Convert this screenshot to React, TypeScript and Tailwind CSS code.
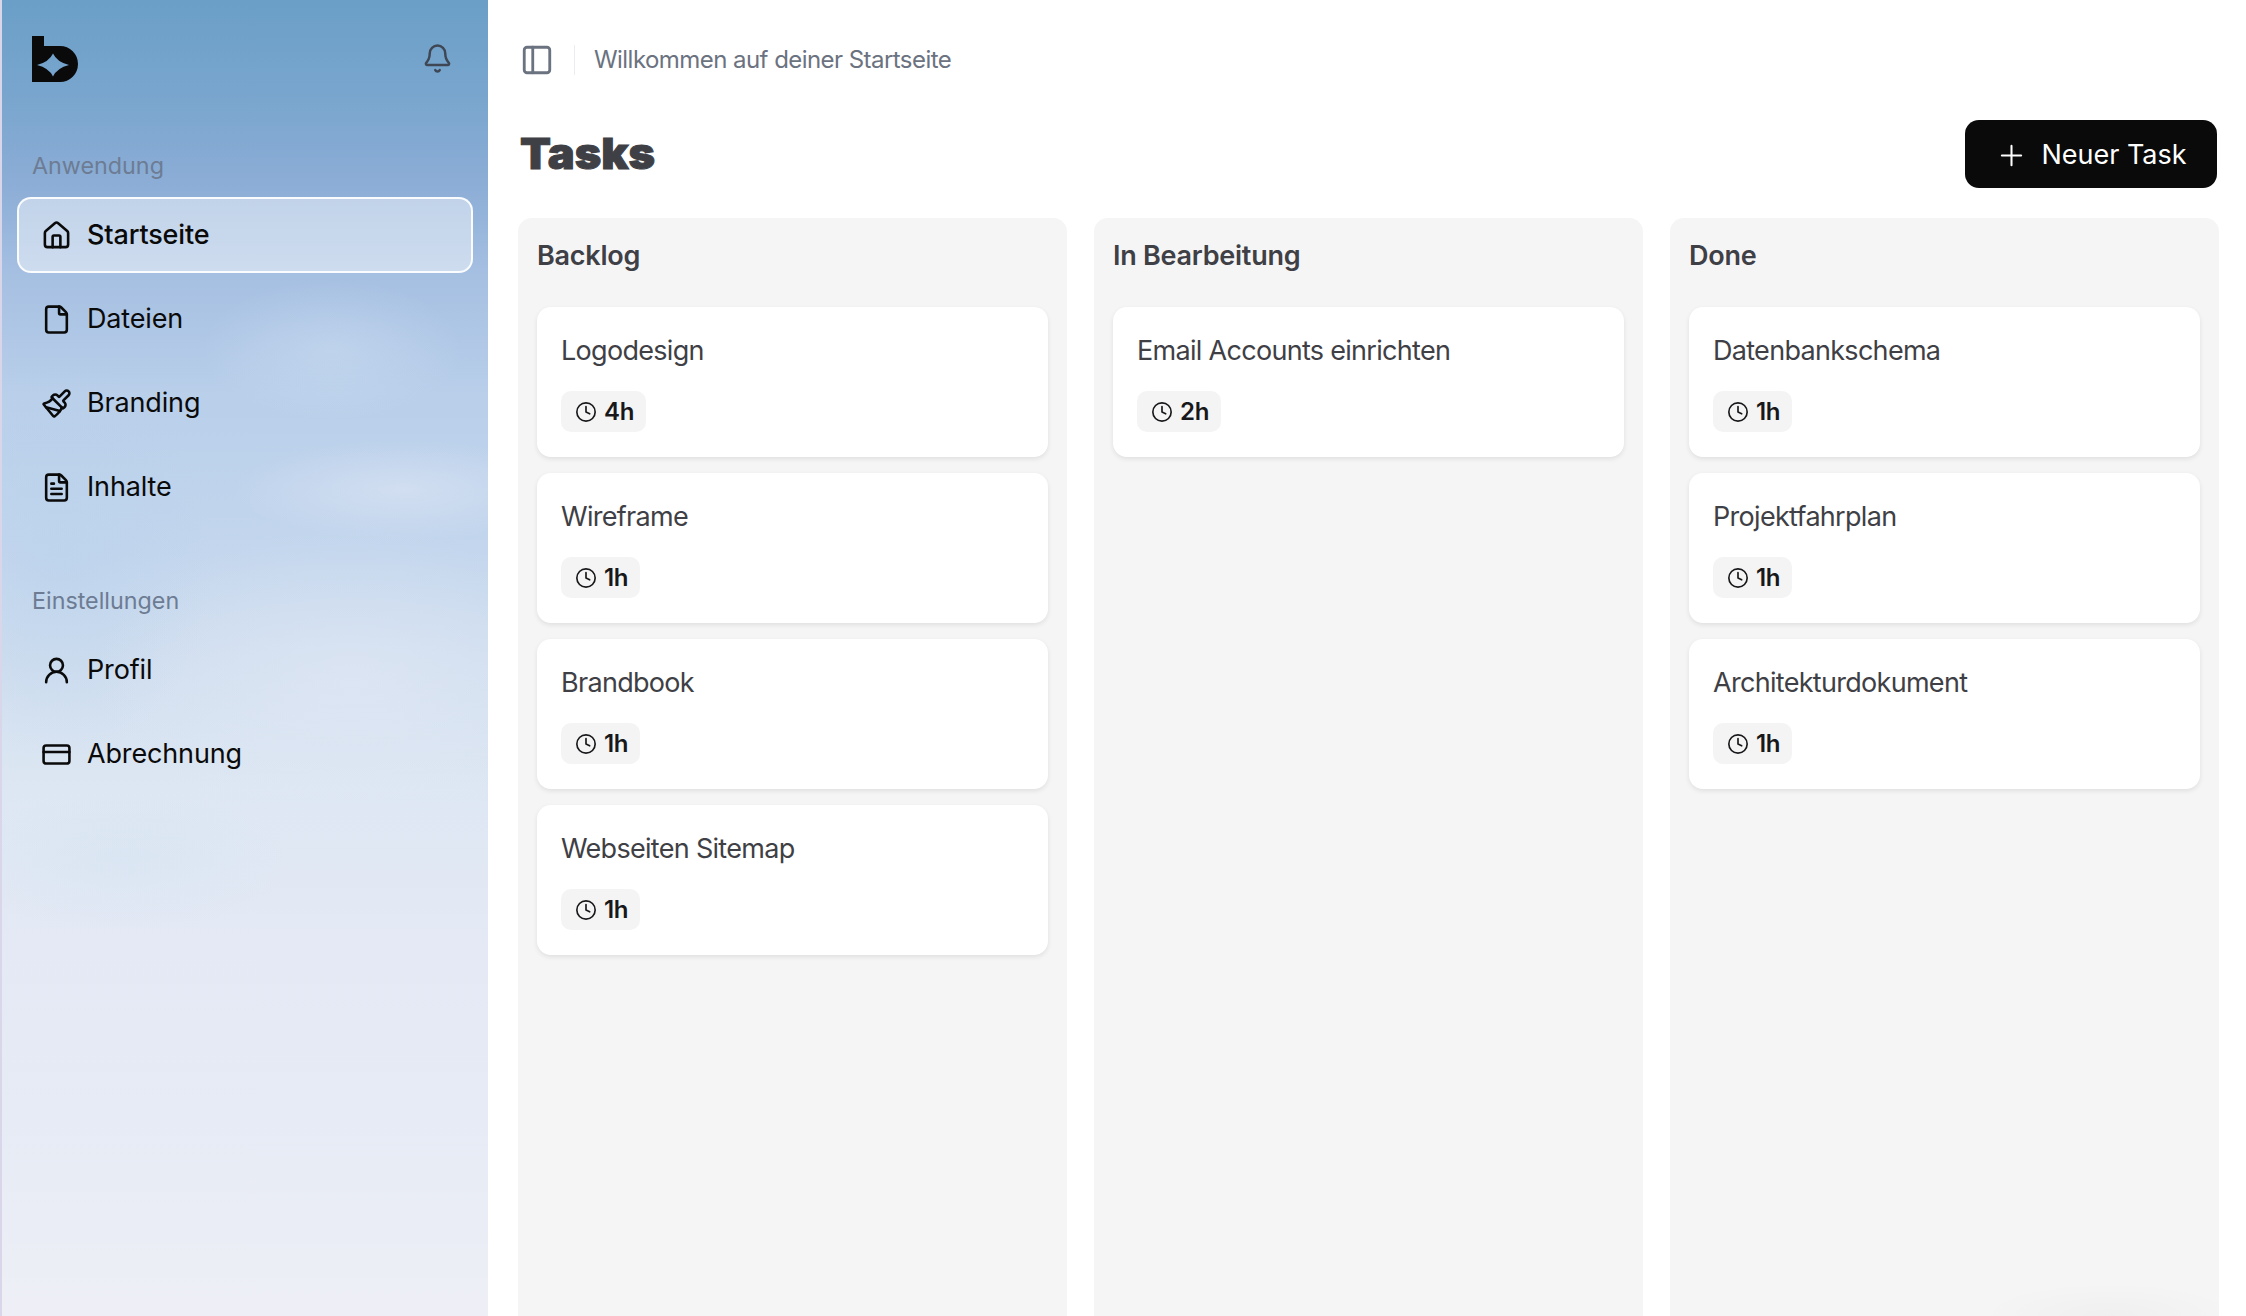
import { Bell, Clock, CreditCard, File, FileText, House, Paintbrush, PanelLeft, Plus, UserRound } from "lucide-react";
import type { ComponentType } from "react";

type IconT = ComponentType<{ size?: number; strokeWidth?: number; className?: string }>;

const columns = [
  { title: "Backlog", bg: "bg-[#f5f5f6]", cards: [["Logodesign", "4h"], ["Wireframe", "1h"], ["Brandbook", "1h"], ["Webseiten Sitemap", "1h"]] },
  { title: "In Bearbeitung", bg: "bg-[#f5f5f6]", cards: [["Email Accounts einrichten", "2h"]] },
  {
    title: "Done",
    bg: "bg-[radial-gradient(ellipse_130px_34px_at_440px_100%,rgba(0,0,0,0.022),transparent),linear-gradient(#f5f5f6,#f5f5f6)]",
    cards: [["Datenbankschema", "1h"], ["Projektfahrplan", "1h"], ["Architekturdokument", "1h"]],
  },
];

function NavItem({ icon: Icon, label, active }: { icon: IconT; label: string; active?: boolean }) {
  return (
    <div
      className={
        "flex h-[76px] items-center gap-[15px] rounded-[14px] border-2 pl-[22px] text-[27px] tracking-[-0.15px] text-[#0a0a0a] " +
        (active ? "border-white/90 bg-white/45 font-medium" : "border-transparent")
      }
    >
      <Icon size={31} strokeWidth={2} className="shrink-0" />
      <span>{label}</span>
    </div>
  );
}

function Logo() {
  return (
    <svg width="46" height="46" viewBox="0 0 46 46" className="block">
      <path
        fill="#0a0a0a"
        fillRule="evenodd"
        d="M0 0H12V10H28A18 18 0 0 1 28 46H0ZM5 29Q17 26 21 17.5Q25 26 37 29Q25 32 21 40.5Q17 32 5 29Z"
      />
    </svg>
  );
}

export default function App() {
  return (
    <div className="flex h-[1316px] w-[2246px] overflow-hidden bg-white font-['Inter',sans-serif]">
      <aside className="relative h-full w-[488px] shrink-0 border-l-2 border-[#d8d6e8] bg-[radial-gradient(ellipse_130px_70px_at_330px_350px,rgba(215,228,245,0.35),transparent),radial-gradient(ellipse_170px_50px_at_400px_490px,rgba(228,233,246,0.5),transparent),radial-gradient(ellipse_170px_70px_at_120px_860px,rgba(210,226,242,0.4),transparent),radial-gradient(ellipse_260px_150px_at_350px_680px,rgba(225,232,245,0.6),transparent),radial-gradient(ellipse_150px_200px_at_60px_560px,rgba(185,210,236,0.5),transparent),linear-gradient(180deg,#6b9fc7_0%,#78a5cd_7%,#8cadd6_14%,#a6c0e2_21%,#b9cfea_30%,#c3d6ed_42%,#d0deef_50%,#dde7f3_60%,#e4e9f5_72%,#e6ebf5_85%,#eeeff6_100%)]">
        <div className="mt-[36px] flex h-[46px] items-center justify-between pl-[30px] pr-[35px]">
          <Logo />
          <Bell size={31} strokeWidth={1.9} className="mb-[2px] text-[#3f4654]" />
        </div>
        <div className="mt-[67px] px-[15px]">
          <p className="h-[33px] pl-[15px] text-[23.3px] leading-[33px] text-[#6d7c93]">Anwendung</p>
          <nav className="mt-[15px] flex flex-col gap-[8px]">
            <NavItem icon={House} label="Startseite" active />
            <NavItem icon={File} label="Dateien" />
            <NavItem icon={Paintbrush} label="Branding" />
            <NavItem icon={FileText} label="Inhalte" />
          </nav>
          <p className="mt-[59px] h-[33px] pl-[15px] text-[23.3px] leading-[33px] text-[#6d7c93]">Einstellungen</p>
          <nav className="mt-[15px] flex flex-col gap-[8px]">
            <NavItem icon={UserRound} label="Profil" />
            <NavItem icon={CreditCard} label="Abrechnung" />
          </nav>
        </div>
      </aside>

      <main className="flex min-w-0 flex-1 flex-col pl-[30px] pr-[27px]">
        <header className="flex h-[120px] shrink-0 items-center">
          <PanelLeft size={34} strokeWidth={2} className="ml-[2px] text-[#6b7280]" />
          <div className="ml-[20px] h-[30px] w-px bg-[#ececee]" />
          <p className="ml-[19px] text-[24px] tracking-[-0.55px] text-[#6b7280]">Willkommen auf deiner Startseite</p>
        </header>

        <div className="flex h-[68px] shrink-0 items-center justify-between">
          <h1 className="mb-[2px] ml-[2px] origin-left scale-x-[1.05] text-[43px] font-black text-[#3f3f46] [-webkit-text-stroke:1px_#3f3f46]">Tasks</h1>
          <button className="mr-[2px] flex h-[68px] w-[252px] items-center justify-center gap-[13px] rounded-[14px] bg-[#0a0a0a] pt-[2px] text-[27px] text-white">
            <Plus size={33} strokeWidth={1.5} />
            <span>Neuer Task</span>
          </button>
        </div>

        <div className="mt-[30px] grid min-h-0 flex-1 grid-cols-3 gap-[27px]">
          {columns.map((col) => (
            <section key={col.title} className={"rounded-t-[14px] px-[19px] pt-[20px] " + col.bg}>
              <h2 className="h-[36px] text-[27px] font-semibold leading-[36px] tracking-[-0.25px] text-[#3f3f46]">{col.title}</h2>
              <div className="mt-[33px] flex flex-col gap-[16px]">
                {col.cards.map(([name, time]) => (
                  <article
                    key={name}
                    className="flex h-[150px] flex-col rounded-[14px] bg-white pl-[24px] pt-[25px] shadow-[0_2px_5px_rgba(0,0,0,0.09)]"
                  >
                    <p className="h-[38px] text-[27px] leading-[38px] tracking-[-0.7px] text-[#3f3f46]">{name}</p>
                    <div className="mt-[21px] flex h-[41px] w-fit items-center gap-[7px] rounded-[10px] bg-[#f4f4f5] pl-[14px] pr-[12px] text-[24px] font-semibold tracking-[-0.3px] text-[#18181b]">
                      <Clock size={22} strokeWidth={1.8} />
                      <span>{time}</span>
                    </div>
                  </article>
                ))}
              </div>
            </section>
          ))}
        </div>
      </main>
    </div>
  );
}
